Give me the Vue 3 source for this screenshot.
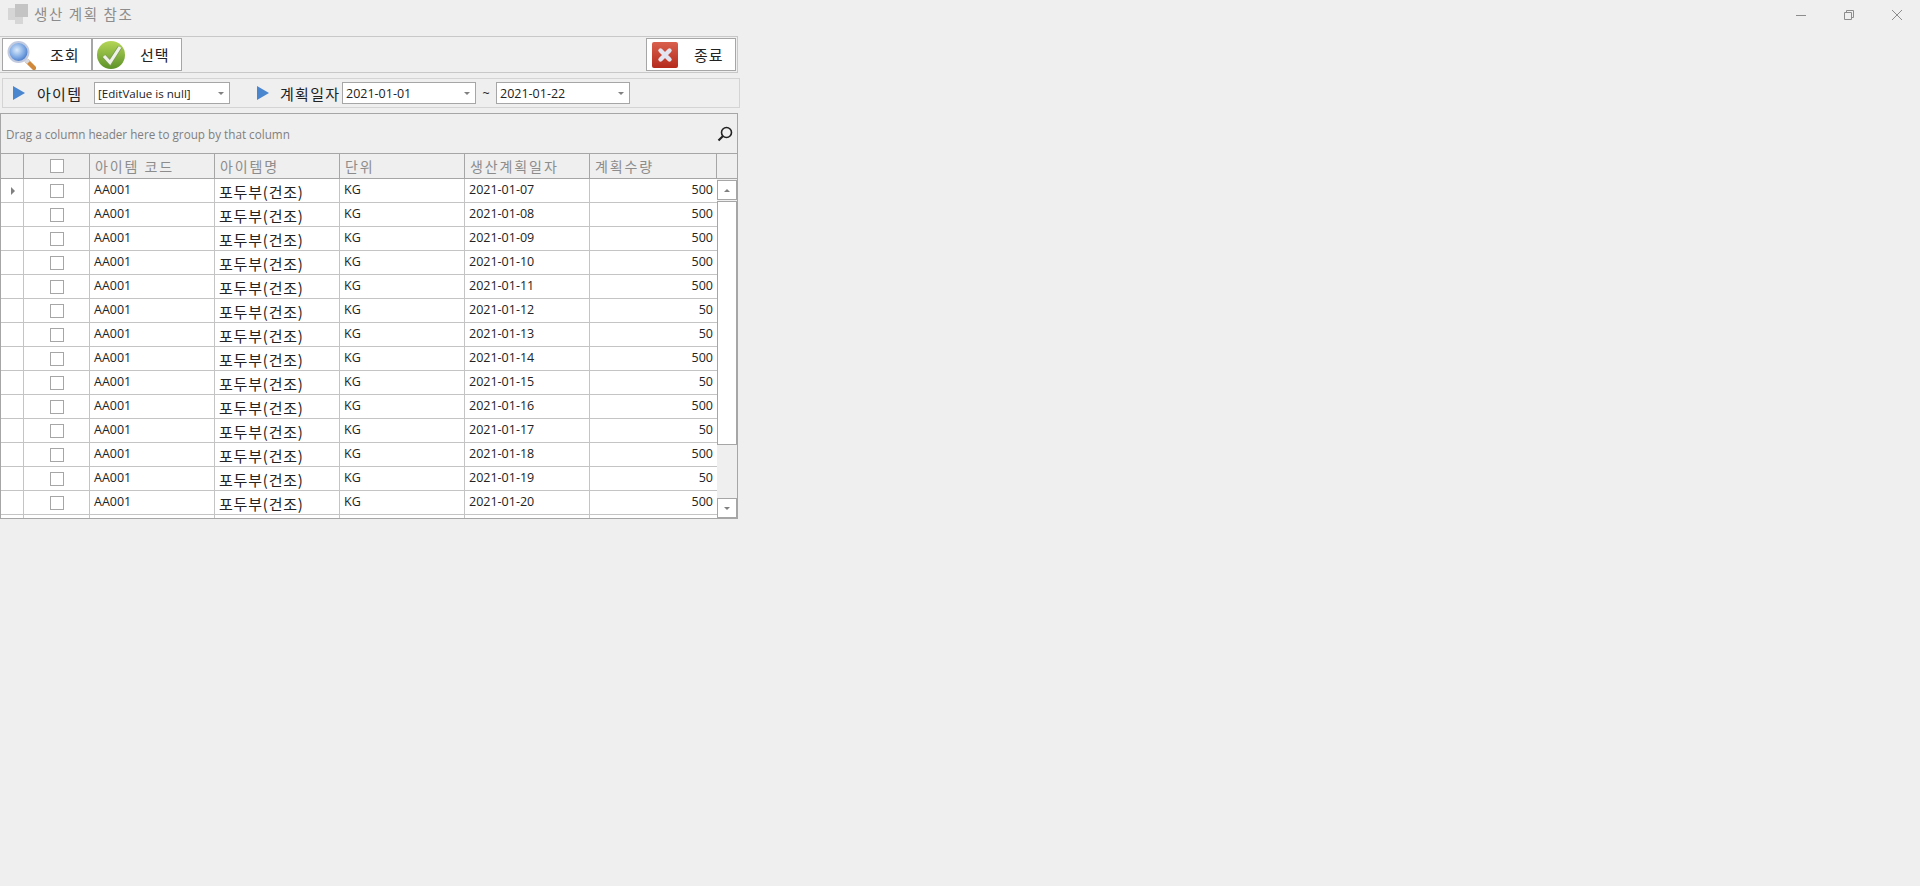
<script setup>
const columns = ['아이템 코드', '아이템명', '단위', '생산계획일자', '계획수량']

const rows = [
  ['2021-01-07', 500],
  ['2021-01-08', 500],
  ['2021-01-09', 500],
  ['2021-01-10', 500],
  ['2021-01-11', 500],
  ['2021-01-12', 50],
  ['2021-01-13', 50],
  ['2021-01-14', 500],
  ['2021-01-15', 50],
  ['2021-01-16', 500],
  ['2021-01-17', 50],
  ['2021-01-18', 500],
  ['2021-01-19', 50],
  ['2021-01-20', 500],
  ['', ''],
]
</script>

<template>
  <div class="page">
    <header class="titlebar">
      <div class="title-left">
        <svg class="app-icon" width="21" height="21" viewBox="0 0 21 21">
          <rect x="0" y="4" width="7" height="12" fill="#d6d6d6" />
          <rect x="7" y="0" width="13" height="13" fill="#c4c4c4" />
          <rect x="7" y="13" width="8" height="7" fill="#d6d6d6" />
        </svg>
        <span class="title-text">생산 계획 참조</span>
      </div>
      <div class="window-btns">
        <svg width="46" height="30" viewBox="0 0 46 30"><path d="M18 15.5h10" stroke="#8c8c8c" fill="none" /></svg>
        <svg width="46" height="30" viewBox="0 0 46 30"><path d="M19.5 12.5h7v7h-7zM21.5 12.5v-2h7v7h-2" stroke="#8c8c8c" fill="none" /></svg>
        <svg width="46" height="30" viewBox="0 0 46 30"><path d="M18 10l10 10M28 10L18 20" stroke="#8c8c8c" fill="none" /></svg>
      </div>
    </header>

    <div class="toolbar">
      <div class="tool-group">
        <button class="tool-btn" type="button">
          <svg width="30" height="31" viewBox="0 0 30 31">
            <defs>
              <radialGradient id="lens" cx="0.42" cy="0.4" r="0.7">
                <stop offset="0" stop-color="#dcebfa" />
                <stop offset="0.55" stop-color="#7aa6e2" />
                <stop offset="1" stop-color="#2f62b8" />
              </radialGradient>
            </defs>
            <path d="M21 22l7 7" stroke="#d0893a" stroke-width="4.4" stroke-linecap="round" />
            <path d="M19.5 20.5l3 3" stroke="#d8d8e0" stroke-width="4" />
            <circle cx="12.5" cy="13" r="10" fill="url(#lens)" stroke="#c2cae0" stroke-width="2" />
          </svg>
          <span>조회</span>
        </button>
        <button class="tool-btn" type="button">
          <svg width="30" height="31" viewBox="0 0 30 31">
            <defs>
              <linearGradient id="okfill" x1="0" y1="0" x2="0" y2="1">
                <stop offset="0" stop-color="#b5d657" />
                <stop offset="1" stop-color="#5c9228" />
              </linearGradient>
            </defs>
            <circle cx="15" cy="16" r="14" fill="url(#okfill)" />
            <path d="M8 17l6 6.5L24 8" fill="none" stroke="#7d9a58" stroke-width="4.6" />
            <path d="M8 17l6 6.5L24 8" fill="none" stroke="#f0f2ea" stroke-width="3.2" />
          </svg>
          <span>선택</span>
        </button>
      </div>
      <button class="tool-btn" type="button">
        <svg width="30" height="31" viewBox="0 0 30 31">
          <defs>
            <linearGradient id="closefill" x1="0" y1="0" x2="0" y2="1">
              <stop offset="0" stop-color="#d9604d" />
              <stop offset="1" stop-color="#b52a1c" />
            </linearGradient>
          </defs>
          <rect x="2" y="3" width="26" height="26" rx="2" fill="url(#closefill)" />
          <path d="M10.5 11.5l9 9M19.5 11.5l-9 9" stroke="#e2e4f0" stroke-width="4.4" stroke-linecap="round" />
        </svg>
        <span>종료</span>
      </button>
    </div>

    <div class="filter">
      <span class="marker"></span>
      <label class="filter-label item-label">아이템</label>
      <div class="combo combo-item">
        <span>[EditValue is null]</span>
        <i class="caret"></i>
      </div>
      <span class="marker marker-date"></span>
      <label class="filter-label date-label">계획일자</label>
      <div class="combo combo-date">
        <span>2021-01-01</span>
        <i class="caret"></i>
      </div>
      <span class="tilde">~</span>
      <div class="combo combo-date">
        <span>2021-01-22</span>
        <i class="caret"></i>
      </div>
    </div>

    <section class="grid">
      <div class="group-panel">
        <span>Drag a column header here to group by that column</span>
        <svg width="18" height="18" viewBox="0 0 18 18">
          <circle cx="10.5" cy="7.5" r="5" fill="none" stroke="#222" stroke-width="1.6" />
          <path d="M7 11L2.5 15.5" stroke="#222" stroke-width="2.2" />
        </svg>
      </div>

      <div class="grid-row header-row">
        <div class="cell indicator"></div>
        <div class="cell check"><i class="box"></i></div>
        <div v-for="col in columns" :key="col" class="cell">{{ col }}</div>
        <div class="cell corner"></div>
      </div>

      <div class="grid-body">
        <div class="rows">
          <div v-for="(row, i) in rows" :key="i" class="grid-row data-row">
            <div class="cell indicator">
              <i v-if="i === 0" class="focus-arrow"></i>
            </div>
            <div class="cell check"><i v-if="row[0]" class="box"></i></div>
            <div class="cell">{{ row[0] && 'AA001' }}</div>
            <div class="cell name">{{ row[0] && '포두부(건조)' }}</div>
            <div class="cell">{{ row[0] && 'KG' }}</div>
            <div class="cell">{{ row[0] }}</div>
            <div class="cell qty">{{ row[1] }}</div>
          </div>
        </div>
        <div class="scrollbar">
          <div class="scroll-btn"><i class="tri-up"></i></div>
          <div class="thumb"></div>
          <div class="scroll-btn down"><i class="caret"></i></div>
        </div>
      </div>
    </section>
  </div>
</template>

<style scoped>
.page {
  width: 1920px;
  height: 886px;
  background: #efefef;
  overflow: hidden;
  font-family: "Open Sans", "Noto Sans CJK KR", sans-serif;
  color: #222;
}

.titlebar {
  height: 36px;
  display: flex;
  justify-content: space-between;
}

.title-left {
  display: flex;
  align-items: flex-start;
  padding: 4px 0 0 8px;
}

.title-text {
  margin-left: 5px;
  font-family: "Noto Sans CJK KR", sans-serif;
  font-size: 14.5px;
  line-height: 20px;
  letter-spacing: 1.6px;
  color: #8c8c8c;
}

.window-btns {
  display: flex;
  gap: 1px;
}

.window-btns svg:last-child {
  margin-left: 2px;
}

.toolbar {
  width: 738px;
  height: 37px;
  box-sizing: border-box;
  border: 1px solid #c8c8c8;
  border-left: 0;
  padding: 1px 1px 1px 2px;
  display: flex;
  justify-content: space-between;
}

.tool-group {
  display: flex;
}

.tool-btn {
  width: 90px;
  height: 33px;
  box-sizing: border-box;
  border: 1px solid #a6a6a6;
  background: #fff;
  padding: 0 0 0 3px;
  display: flex;
  align-items: center;
  font-family: "Noto Sans CJK KR", sans-serif;
  font-size: 15px;
  letter-spacing: 1px;
  color: #222;
}

.tool-btn span {
  margin-left: 14px;
}

.filter {
  width: 738px;
  height: 30px;
  box-sizing: border-box;
  margin: 5px 0 0 2px;
  border: 1px solid #d4d4d4;
  display: flex;
  align-items: center;
}

.marker {
  width: 0;
  height: 0;
  margin-left: 10px;
  border-left: 12px solid #4a86cf;
  border-top: 7.5px solid transparent;
  border-bottom: 7.5px solid transparent;
}

.marker-date {
  margin-left: 27px;
}

.filter-label {
  font-family: "Noto Sans CJK KR", sans-serif;
  font-size: 15px;
  letter-spacing: 1.3px;
  color: #222;
  white-space: nowrap;
}

.item-label {
  width: 57px;
  margin-left: 12px;
}

.date-label {
  width: 62px;
  margin-left: 11px;
}

.combo {
  height: 22px;
  box-sizing: border-box;
  border: 1px solid #a6a6a6;
  background: #fff;
  padding: 0 5px 0 3px;
  display: flex;
  align-items: center;
  justify-content: space-between;
  font-size: 12.5px;
}

.combo-item {
  width: 136px;
  font-size: 11.6px;
}

.combo-date {
  width: 134px;
}

.tilde {
  width: 20px;
  text-align: center;
  font-size: 12.5px;
}

.caret {
  width: 0;
  height: 0;
  border-left: 3px solid transparent;
  border-right: 3px solid transparent;
  border-top: 3px solid #808080;
}

.grid {
  width: 738px;
  height: 406px;
  box-sizing: border-box;
  margin-top: 5px;
  border: 1px solid #a6a6a6;
  overflow: hidden;
}

.group-panel {
  height: 40px;
  box-sizing: border-box;
  border-bottom: 1px solid #a6a6a6;
  padding: 0 3px 0 5px;
  display: flex;
  align-items: center;
  justify-content: space-between;
  font-size: 11.7px;
  color: #808080;
}

.grid-row {
  display: grid;
  grid-template-columns: 23px 66px 125px 125px 125px 125px 127px;
}

.header-row {
  grid-template-columns: 23px 66px 125px 125px 125px 125px 127px 1fr;
  height: 25px;
  box-sizing: border-box;
  border-bottom: 1px solid #a6a6a6;
}

.header-row .cell {
  border-right-color: #a6a6a6;
  padding-left: 5px;
  font-family: "Noto Sans CJK KR", sans-serif;
  font-size: 14px;
  letter-spacing: 1.9px;
  color: #8c8c8c;
  line-height: 24px;
}

.header-row .corner {
  border-right: 0;
}

.cell {
  box-sizing: border-box;
  border-right: 1px solid #c4c4c4;
  padding: 0 4px;
  white-space: nowrap;
  overflow: hidden;
}

.grid-body {
  height: 339px;
  display: flex;
  overflow: hidden;
}

.rows {
  width: 716px;
  flex: none;
}

.data-row {
  height: 24px;
  box-sizing: border-box;
  border-bottom: 1px solid #c4c4c4;
  background: #fff;
  font-size: 12.5px;
  line-height: 22px;
  color: #222;
}

.data-row .cell:last-child {
  border-right: 0;
}

.data-row .name {
  font-family: "Noto Sans CJK KR", sans-serif;
  font-size: 15px;
  letter-spacing: 0.8px;
  line-height: 26px;
}

.qty {
  text-align: right;
}

.cell.indicator {
  padding: 0;
  display: flex;
  align-items: center;
  justify-content: center;
}

.cell.check {
  padding: 0;
  display: flex;
  align-items: center;
  justify-content: center;
}

.box {
  width: 14px;
  height: 14px;
  box-sizing: border-box;
  border: 1px solid #a6a6a6;
  background: #fff;
}

.focus-arrow {
  width: 0;
  height: 0;
  margin-left: 1px;
  border-left: 4px solid #808080;
  border-top: 4px solid transparent;
  border-bottom: 4px solid transparent;
}

.scrollbar {
  width: 20px;
  display: flex;
  flex-direction: column;
  height: 339px;
  box-sizing: border-box;
  padding-top: 1px;
}

.scroll-btn {
  height: 20px;
  flex: none;
  box-sizing: border-box;
  border: 1px solid #a6a6a6;
  background: #fff;
  display: flex;
  align-items: center;
  justify-content: center;
}

.scroll-btn.down {
  margin-top: auto;
}

.tri-up {
  width: 0;
  height: 0;
  border-left: 3px solid transparent;
  border-right: 3px solid transparent;
  border-bottom: 3px solid #808080;
}

.thumb {
  height: 244px;
  flex: none;
  box-sizing: border-box;
  margin-top: 1px;
  border: 1px solid #a6a6a6;
  background: #fff;
}
</style>
